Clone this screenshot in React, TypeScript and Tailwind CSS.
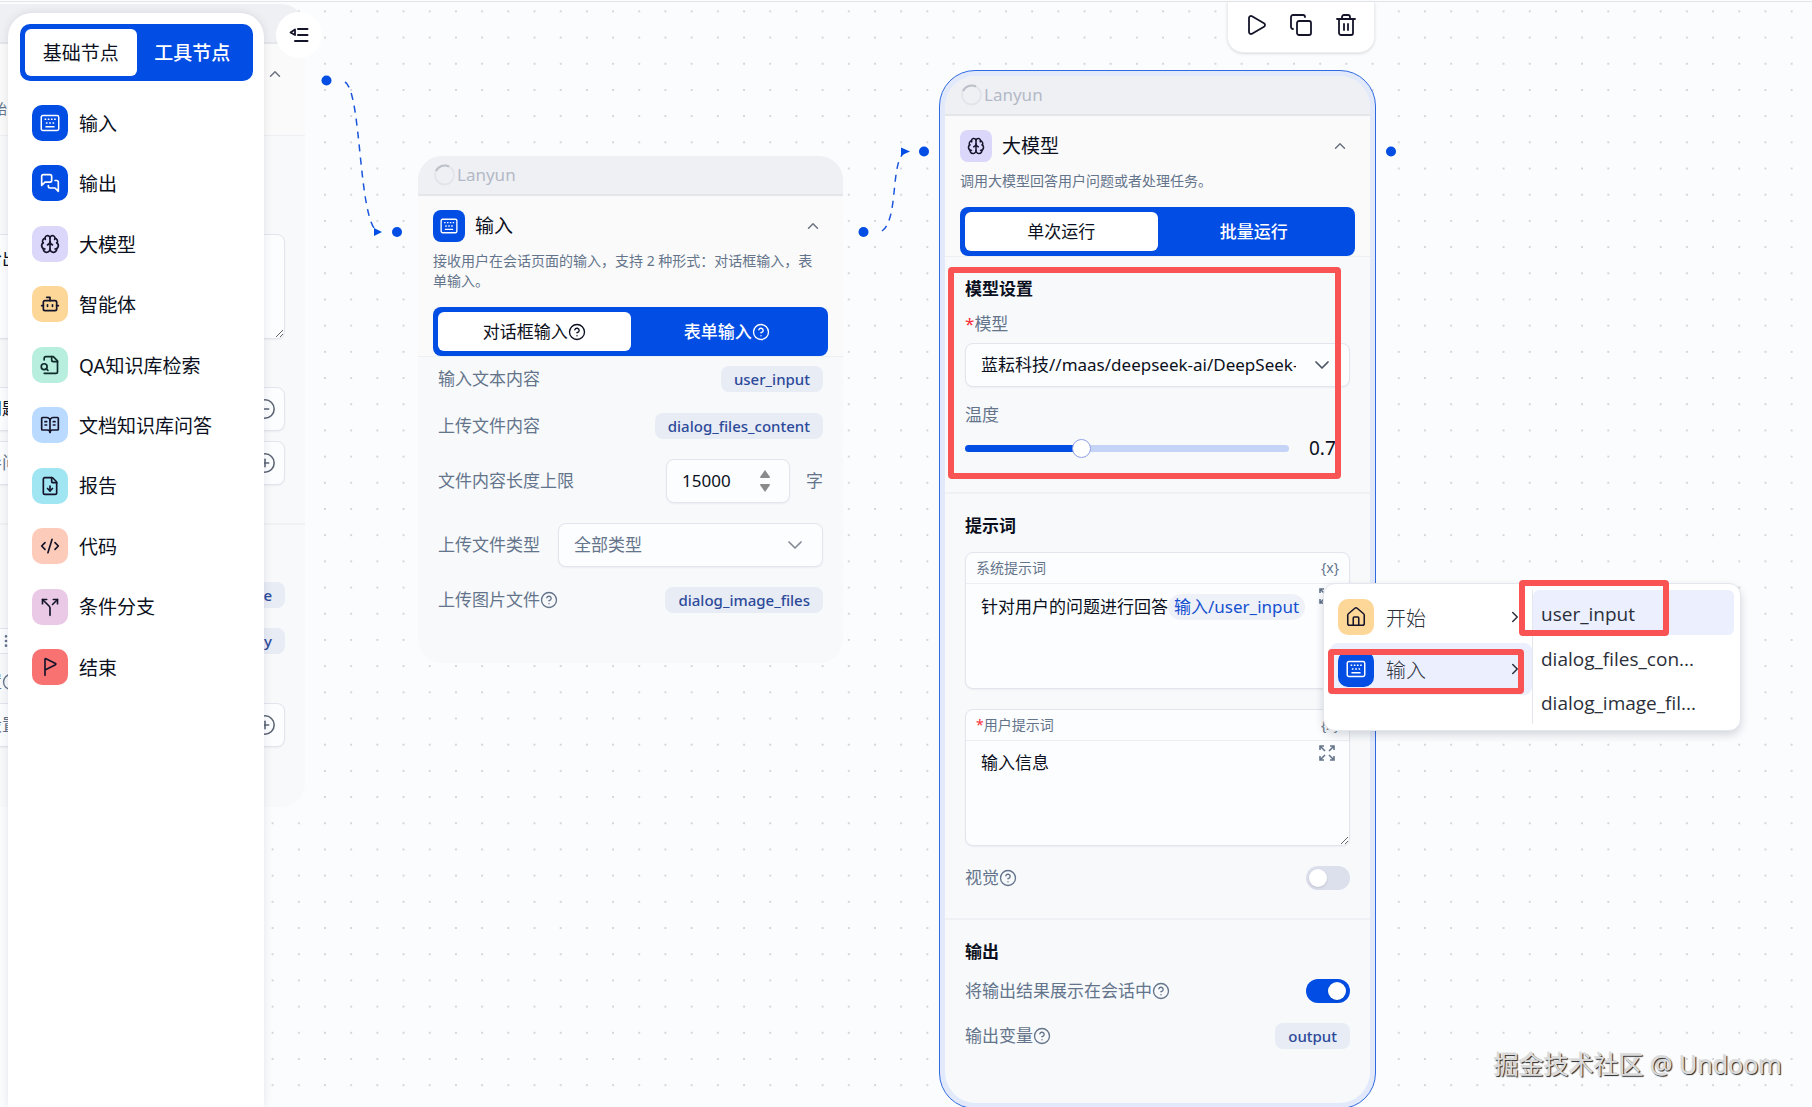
import React, { useState } from "react";
import {
  BookOpenText,
  Bot,
  Brain,
  ChevronDown,
  ChevronRight,
  ChevronUp,
  CircleMinus,
  CirclePlus,
  CircleQuestionMark,
  CodeXml,
  Copy,
  FileDown,
  FlagTriangleRight,
  GripVertical,
  House,
  Play,
  Split,
  Trash2,
} from "lucide-react";

type IconProps = { className?: string };

function KeyboardIcon({ className }: IconProps) {
  return (
    <svg viewBox="0 0 24 24" className={className} fill="none" stroke="currentColor" strokeWidth="1.8" aria-hidden="true">
      <rect x="1.5" y="3" width="21" height="18" rx="2" />
      <path d="M5.5 7.5h2M9.3 7.5h2M13.1 7.5h2M16.9 7.5h2M7 12h2M11 12h2M15 12h2" />
      <path d="M6.5 16.5h11" />
    </svg>
  );
}

function ChatsIcon({ className }: IconProps) {
  return (
    <svg
      viewBox="0 0 24 24"
      className={className}
      fill="none"
      stroke="currentColor"
      strokeWidth="2"
      strokeLinecap="round"
      strokeLinejoin="round"
      aria-hidden="true"
    >
      <path d="M14 9a2 2 0 0 1-2 2H6l-4 4V4c0-1.1.9-2 2-2h8a2 2 0 0 1 2 2z" />
      <path d="M18 9h2a2 2 0 0 1 2 2v11l-4-4h-6a2 2 0 0 1-2-2v-1" />
    </svg>
  );
}

function FileLookupIcon({ className }: IconProps) {
  return (
    <svg
      viewBox="0 0 24 24"
      className={className}
      fill="none"
      stroke="currentColor"
      strokeWidth="2"
      strokeLinecap="round"
      strokeLinejoin="round"
      aria-hidden="true"
    >
      <path d="M14 2v4a2 2 0 0 0 2 2h5" />
      <path d="M5 22h14a2 2 0 0 0 2-2V7l-5-5H7a2 2 0 0 0-2 2v2" />
      <circle cx="5" cy="14" r="3.500" />
      <path d="m9.500 18.500-2-2" />
    </svg>
  );
}

function CollapseIcon({ className }: IconProps) {
  return (
    <svg viewBox="0 0 20 16" className={className} fill="none" stroke="currentColor" strokeWidth="2" strokeLinecap="round" strokeLinejoin="round" aria-hidden="true">
      <path d="M9 2h9.500M9 8h9.500M6 14h12.500" />
      <path d="M6 2.500 1.500 5.500 6 8z" fill="none" strokeWidth="1.800" />
    </svg>
  );
}

function ExpandIcon({ className }: IconProps) {
  return (
    <svg viewBox="0 0 16 16" className={className} fill="none" stroke="currentColor" strokeWidth="1.600" aria-hidden="true">
      <path d="M1 5V1h4M1 1l5 5M11 1h4v4M15 1l-5 5M1 11v4h4M1 15l5-5M15 11v4h-4M15 15l-5-5" />
    </svg>
  );
}

function Spinner() {
  return (
    <svg viewBox="0 0 22 22" className="mr-px size-[22px]" fill="none" strokeWidth="2" aria-hidden="true">
      <circle cx="10.500" cy="11" r="9.500" stroke="#e3e5ea" />
      <path d="M2 7a9.500 9.500 0 0 1 13-4.500" stroke="#bcc0c9" />
    </svg>
  );
}

const paletteItems = [
  { label: "输入", icon: KeyboardIcon, tone: "bg-[#024de3] text-white" },
  { label: "输出", icon: ChatsIcon, tone: "bg-[#024de3] text-white" },
  { label: "大模型", icon: Brain, tone: "bg-[#dad7fb] text-[#14142b]" },
  { label: "智能体", icon: Bot, tone: "bg-[#fdd798] text-[#14142b]" },
  { label: "QA知识库检索", icon: FileLookupIcon, tone: "bg-[#b8eedd] text-[#0f2a2b]" },
  { label: "文档知识库问答", icon: BookOpenText, tone: "bg-[#badaff] text-[#14142b]" },
  { label: "报告", icon: FileDown, tone: "bg-[#a0e5f2] text-[#14142b]" },
  { label: "代码", icon: CodeXml, tone: "bg-[#fdcbb9] text-[#14142b]" },
  { label: "条件分支", icon: Split, tone: "bg-[#eac9e6] text-[#14142b]" },
  { label: "结束", icon: FlagTriangleRight, tone: "bg-[#f87272] text-[#14142b]" },
];

function Palette() {
  return (
    <aside className="relative z-10 ml-2 mt-[13px] flex w-64 flex-col rounded-t-3xl bg-white pl-3 pr-[11px] pt-[11px] shadow-[0_0_10px_rgba(15,23,42,0.10)]">
      <div className="flex h-[57px] rounded-[10px] bg-[#024de3] p-[5px] text-[19px]" role="tablist">
        <button role="tab" aria-selected="true" className="flex-1 rounded-md bg-white pt-0.5 text-[#0b1020]">
          基础节点
        </button>
        <button role="tab" aria-selected="false" className="flex-1 pt-0.5 font-medium text-white">
          工具节点
        </button>
      </div>
      <ul className="mt-6 flex h-[580px] flex-col justify-between px-3">
        {paletteItems.map(({ label, icon: Icon, tone }) => (
          <li key={label}>
            <button className="flex h-9 w-full items-center gap-[11px] text-left text-[19px] text-[#0b1020]">
              <span className={`flex size-9 items-center justify-center rounded-[10px] ${tone}`}>
                <Icon className="size-5" />
              </span>
              <span className="pt-0.5">{label}</span>
            </button>
          </li>
        ))}
      </ul>
    </aside>
  );
}

function Help() {
  return <CircleQuestionMark className="size-[18px] shrink-0" strokeWidth={1.8} />;
}

function Tag({ children }: { children: React.ReactNode }) {
  return (
    <span className="flex h-[26px] items-center rounded-lg bg-[#e8ecf5] px-[13px] text-[15px] font-medium text-[#2c4a9a]">
      {children}
    </span>
  );
}

function Row({ label, help, className = "", children }: { label: string; help?: boolean; className?: string; children: React.ReactNode }) {
  return (
    <div className={`flex items-center justify-between ${className}`}>
      <span className="flex items-center text-[17px] leading-6 text-[#64748b]">
        {label}
        {help && <Help />}
      </span>
      {children}
    </div>
  );
}

function Tabs({ items, help }: { items: string[]; help?: boolean }) {
  return (
    <div className="mt-4 flex h-[49px] rounded-lg bg-[#024de3] p-[5px] text-[17px]" role="tablist">
      <button role="tab" aria-selected="true" className="flex flex-1 items-center justify-center rounded-md bg-white text-[#0b1020]">
        {items[0]}
        {help && <Help />}
      </button>
      <button role="tab" aria-selected="false" className="flex flex-1 items-center justify-center font-medium text-white">
        {items[1]}
        {help && <Help />}
      </button>
    </div>
  );
}

function NodeCard({
  title,
  icon,
  desc,
  children,
  className = "",
  tabs,
}: {
  title: string;
  icon: React.ReactNode;
  desc: string;
  children: React.ReactNode;
  className?: string;
  tabs?: React.ReactNode;
}) {
  return (
    <article className={`w-[425px] overflow-hidden bg-[#f7f9fb] ${className}`}>
      <div className="flex h-10 items-center border-b-2 border-[#e4e6ea] bg-[#eff0f4] pl-4 text-[17px] text-[#b3b9c6]">
        <Spinner />
        <span>Lanyun</span>
      </div>
      <div className="border-b border-[#edeff2] bg-[#fafafa] px-[15px] pt-3.5">
        <div className="flex h-8 items-center text-[19px] text-[#0b1020]">
          {icon}
          <h2 className="ml-2.5 flex-1">{title}</h2>
          <button aria-label="收起" className="mr-1.5 text-[#6b7280]">
            <ChevronUp className="size-[18px]" />
          </button>
        </div>
        <p className="mt-[9px] pr-2 text-sm leading-5 text-[#64748b]">{desc}</p>
        {tabs}
      </div>
      {children}
    </article>
  );
}

function NodeIcon({ tone, children }: { tone: string; children: React.ReactNode }) {
  return <span className={`flex size-8 items-center justify-center rounded-lg ${tone}`}>{children}</span>;
}

const fieldBox = "rounded-lg border border-[#e2e5ee] bg-[#fcfdff] shadow-[0_1px_2px_rgba(15,23,42,0.05)]";

function StartNode() {
  return (
    <NodeCard
      className="absolute left-[-120px] top-1 rounded-3xl"
      title="开始"
      desc="工作流运行的起始"
      icon={
        <NodeIcon tone="bg-[#fdd798] text-[#14142b]">
          <House className="size-[18px]" />
        </NodeIcon>
      }
      tabs={<div className="h-4" />}
    >
      <section className="border-b-2 border-[#eff1f4] px-5 pb-[38px] pt-[98px]">
        <textarea
          aria-label="开场白"
          defaultValue="请在此处给出说明"
          className={`block h-[105px] w-full resize px-4 py-3 text-[17px] leading-6 text-[#0b1020] ${fieldBox}`}
        />
        <div className={`mt-12 flex h-11 items-center justify-between pl-4 pr-2 text-[17px] text-[#0b1020] ${fieldBox}`}>
          请输入的问题
          <CircleMinus className="size-[22px] text-[#5b6475]" strokeWidth={1.7} />
        </div>
        <div className={`mt-2.5 flex h-11 items-center justify-between pl-4 pr-2 text-[17px] text-[#64748b] ${fieldBox}`}>
          请输入引导问
          <CirclePlus className="size-[22px] text-[#5b6475]" strokeWidth={1.7} />
        </div>
      </section>
      <section className="px-5 pb-[60px] pt-[57px]">
        <Row label="全局变量">
          <Tag>current_time</Tag>
        </Row>
        <div className="mt-5 flex items-center justify-between">
          <span className="flex h-[26px] w-40 items-center rounded border border-[#e2e5ee] bg-[#fcfdff] pl-[99px] text-[#64748b]">
            <GripVertical className="size-4" />
          </span>
          <Tag>chat_history</Tag>
        </div>
        <Row label="预置问题配置" help className="mt-4">
          <span />
        </Row>
        <div className={`mt-[9px] flex h-11 items-center justify-between pl-4 pr-2 text-[17px] text-[#64748b] ${fieldBox}`}>
          请输入预设置
          <CirclePlus className="size-[22px] text-[#5b6475]" strokeWidth={1.7} />
        </div>
      </section>
    </NodeCard>
  );
}

function InputNode() {
  return (
    <NodeCard
      className="absolute left-[418px] top-[156px] rounded-3xl"
      title="输入"
      desc="接收用户在会话页面的输入，支持 2 种形式：对话框输入，表单输入。"
      icon={
        <NodeIcon tone="bg-[#024de3] text-white">
          <KeyboardIcon className="size-[18px]" />
        </NodeIcon>
      }
      tabs={<Tabs items={["对话框输入", "表单输入"]} help />}
    >
      <section className="px-5 pb-[50px] pt-[9px]">
        <Row label="输入文本内容">
          <Tag>user_input</Tag>
        </Row>
        <Row label="上传文件内容" className="mt-[21px]">
          <Tag>dialog_files_content</Tag>
        </Row>
        <Row label="文件内容长度上限" className="mt-5">
          <div className="flex items-center gap-4 text-[17px] text-[#64748b]">
            <div className={`flex h-11 w-[124px] items-center pl-[15px] pr-[18px] ${fieldBox}`}>
              <input
                aria-label="文件内容长度上限"
                defaultValue="15000"
                className="w-full min-w-0 bg-transparent text-[17px] text-[#0b1020] outline-none"
              />
              <span className="flex flex-col gap-1.5 text-[#8a8a8a]">
                <button aria-label="增加">
                  <svg viewBox="0 0 12 8" className="h-2 w-3" fill="currentColor"><path d="M6 0 11 7q0 1-1 1H2Q1 8 1 7z" /></svg>
                </button>
                <button aria-label="减少">
                  <svg viewBox="0 0 12 8" className="h-2 w-3" fill="currentColor"><path d="M6 8 11 1q0-1-1-1H2Q1 0 1 1z" /></svg>
                </button>
              </span>
            </div>
            字
          </div>
        </Row>
        <Row label="上传文件类型" className="mt-5">
          <div className="relative w-[265px]">
            <select aria-label="上传文件类型" className={`h-11 w-full appearance-none px-[15px] text-[17px] text-[#64748b] ${fieldBox}`}>
              <option>全部类型</option>
            </select>
            <ChevronDown className="pointer-events-none absolute right-4 top-2.5 size-6 text-[#858b96]" strokeWidth={1.7} />
          </div>
        </Row>
        <Row label="上传图片文件" help className="mt-5">
          <Tag>dialog_image_files</Tag>
        </Row>
      </section>
    </NodeCard>
  );
}

function Switch({ label, defaultChecked }: { label: string; defaultChecked?: boolean }) {
  return (
    <input
      type="checkbox"
      role="switch"
      aria-label={label}
      defaultChecked={defaultChecked}
      className="flex h-6 w-11 appearance-none items-center rounded-full bg-[#dcdfec] px-[3px] before:size-[18px] before:rounded-full before:bg-white before:shadow-sm checked:justify-end checked:bg-[#024de3] checked:px-1"
    />
  );
}

function PromptHead({ label, required }: { label: string; required?: boolean }) {
  return (
    <div className="flex h-[31px] items-center justify-between border-b border-[#eceef4] px-2.5 text-sm text-[#64748b]">
      <span>
        {required && <span className="text-red-500">*</span>}
        {label}
      </span>
      <button aria-label="插入变量">{"{x}"}</button>
    </div>
  );
}

function ModelNode() {
  const [temperature, setTemperature] = useState(0.7);
  return (
    <div className="absolute left-[939px] top-[70px] rounded-[36px] border border-[#2f6ae0] bg-[#e1e9fb] p-[5px]">
      <NodeCard
        className="rounded-[31px]"
        title="大模型"
        desc="调用大模型回答用户问题或者处理任务。"
        icon={
          <NodeIcon tone="bg-[#dad7fb] text-[#14142b]">
            <Brain className="size-[18px]" />
          </NodeIcon>
        }
        tabs={<Tabs items={["单次运行", "批量运行"]} />}
      >
        <section className="border-b-2 border-[#eff1f4] px-5 pb-8 pt-5">
          <h3 className="text-[17px] font-bold leading-6 text-[#0b1020]">模型设置</h3>
          <label htmlFor="model" className="mt-[11px] block text-[17px] leading-6 text-[#64748b]">
            <span className="text-red-500">*</span>模型
          </label>
          <div className="relative mt-[7px]">
            <select id="model" className={`h-11 w-full appearance-none pl-[15px] pr-[53px] text-[17px] text-[#0b1020] ${fieldBox}`}>
              <option>蓝耘科技//maas/deepseek-ai/DeepSeek-R1</option>
            </select>
            <ChevronDown className="pointer-events-none absolute right-4 top-2.5 size-6 text-[#4b5563]" strokeWidth={1.7} />
          </div>
          <label htmlFor="temperature" className="mt-4 block text-[17px] leading-6 text-[#64748b]">
            温度
          </label>
          <div className="mt-[9px] flex h-6 items-center gap-5">
            <input
              id="temperature"
              type="range"
              min={0}
              max={2}
              step={0.1}
              value={temperature}
              onChange={(e) => setTemperature(Number(e.target.value))}
              className="h-[7px] w-[324px] appearance-none rounded-full bg-[linear-gradient(to_right,#024de3_36%,#c5d3f6_36%)] [&::-webkit-slider-thumb]:size-[19px] [&::-webkit-slider-thumb]:appearance-none [&::-webkit-slider-thumb]:rounded-full [&::-webkit-slider-thumb]:border [&::-webkit-slider-thumb]:border-[#8f9fe8] [&::-webkit-slider-thumb]:bg-white"
            />
            <output className="text-[19px] text-[#0b1020]">{temperature}</output>
          </div>
        </section>
        <section className="border-b-2 border-[#eff1f4] px-5 pb-7 pt-5">
          <h3 className="text-[17px] font-bold leading-6 text-[#0b1020]">提示词</h3>
          <div className={`mt-[14px] flex h-[137px] flex-col ${fieldBox}`}>
            <PromptHead label="系统提示词" />
            <div className="flex flex-1 items-start justify-between pl-[15px] pr-3.5 pt-1 text-[17px] text-[#0b1020]">
              <div role="textbox" aria-label="系统提示词" className="flex items-center whitespace-nowrap pt-1.5 leading-[26px]">
                针对用户的问题进行回答
                <span className="rounded-full bg-[#eef1f8] px-1.5 text-[#1550d0]">输入/user_input</span>
              </div>
              <button aria-label="放大" className="text-[#64748b]">
                <ExpandIcon className="size-4" />
              </button>
            </div>
          </div>
          <div className={`relative mt-5 h-[137px] ${fieldBox}`}>
            <PromptHead label="用户提示词" required />
            <textarea
              aria-label="用户提示词"
              defaultValue="输入信息"
              className="block h-[104px] w-full bg-transparent px-[15px] py-2.5 text-[17px] leading-6 text-[#0b1020] outline-none"
            />
            <button aria-label="放大" className="absolute right-3.5 top-[35px] text-[#64748b]">
              <ExpandIcon className="size-4" />
            </button>
          </div>
          <Row label="视觉" help className="mt-5">
            <Switch label="视觉" />
          </Row>
        </section>
        <section className="px-5 pb-[54px] pt-5">
          <h3 className="text-[17px] font-bold leading-6 text-[#0b1020]">输出</h3>
          <Row label="将输出结果展示在会话中" help className="mt-[15px]">
            <Switch label="将输出结果展示在会话中" defaultChecked />
          </Row>
          <Row label="输出变量" help className="mt-5">
            <Tag>output</Tag>
          </Row>
        </section>
      </NodeCard>
    </div>
  );
}

function CanvasLines() {
  return (
    <svg className="absolute inset-0 size-full" aria-hidden="true">
      <defs>
        <pattern id="dots" x="324" y="10.4" width="26.19" height="26.19" patternUnits="userSpaceOnUse">
          <circle cx="1" cy="1" r="0.8" fill="#a0a4ac" />
        </pattern>
      </defs>
      <rect width="100%" height="100%" fill="url(#dots)" />
      <g fill="none" stroke="#1a55dc" strokeWidth="1.5" strokeDasharray="7 6">
        <path d="M345 82C362 92 358 222 378 232" />
        <path d="M882 231C899 219 890 161 905 152" />
      </g>
      <g fill="#024de3">
        <path d="M374 228v8l8-4z" />
        <path d="M901 147.500v8l9-4z" />
        <circle cx="326.500" cy="80.500" r="5" />
        <circle cx="397" cy="232" r="5" />
        <circle cx="863.500" cy="232" r="5" />
        <circle cx="924" cy="151.500" r="5" />
        <circle cx="1391" cy="151.500" r="5" />
      </g>
    </svg>
  );
}

function VariableMenu() {
  return (
    <div
      role="menu"
      className="absolute left-[1323px] top-[583px] flex h-[148px] w-[418px] rounded-xl border border-[#e4e6ee] bg-white p-1.5 font-['Open_Sans','Noto_Sans_CJK_SC',sans-serif] text-[19px] text-[#2b2f3a] shadow-[0_4px_8px_rgba(15,23,42,0.16)]"
    >
      <div className="flex w-[202px] flex-col font-light">
        <button role="menuitem" className="flex h-[53px] items-center px-2">
          <span className="flex size-9 items-center justify-center rounded-[10px] bg-[#fdd798] text-[#14142b]">
            <House className="size-[22px]" strokeWidth={1.7} />
          </span>
          <span className="ml-3 flex-1 pt-1 text-left text-xl">开始</span>
          <ChevronRight className="size-[18px]" />
        </button>
        <button role="menuitem" className="flex h-[52px] items-center rounded-lg bg-[#ebeffe] px-2">
          <span className="flex size-9 items-center justify-center rounded-[10px] bg-[#024de3] text-white">
            <KeyboardIcon className="size-5" />
          </span>
          <span className="ml-3 flex-1 pt-1 text-left text-xl">输入</span>
          <ChevronRight className="size-[18px]" />
        </button>
      </div>
      <div className="flex flex-1 flex-col border-l border-[#e4e6ee]">
        <button role="menuitem" className="h-[45px] rounded-md bg-[#ebeffe] px-2 pt-1 text-left">user_input</button>
        <button role="menuitem" className="h-[45px] px-2 pt-1 text-left">dialog_files_con...</button>
        <button role="menuitem" className="h-[45px] px-2 pt-1 text-left">dialog_image_fil...</button>
      </div>
    </div>
  );
}

export default function App() {
  return (
    <main className="relative flex h-screen overflow-hidden bg-[#fbfcfe] font-['Noto_Sans','Noto_Sans_CJK_SC',sans-serif]">
      <CanvasLines />
      <div className="absolute inset-x-0 top-0 h-0.5 border-b border-[#e3e5e8]" />
      <StartNode />
      <InputNode />
      <ModelNode />
      <div className="absolute left-[1227px] top-0.5 flex h-[51px] w-[148px] items-center justify-center gap-[21px] rounded-b-2xl border border-t-0 border-[#eceef2] bg-white pb-1 text-[#14142b] shadow-sm">
        <button aria-label="运行"><Play className="size-6" strokeWidth={1.8} /></button>
        <button aria-label="复制"><Copy className="size-6" strokeWidth={1.8} /></button>
        <button aria-label="删除"><Trash2 className="size-6" strokeWidth={1.8} /></button>
      </div>
      <Palette />
      <button
        aria-label="收起面板"
        className="relative z-10 ml-3 mt-3 flex size-[46px] items-center justify-center rounded-full bg-white text-[#14142b]"
      >
        <CollapseIcon className="h-4 w-5" />
      </button>
      <VariableMenu />
      <div className="pointer-events-none absolute left-[948px] top-[267px] h-[212px] w-[393px] rounded-[4px] border-6 border-[#f95353]" />
      <div className="pointer-events-none absolute left-[1328px] top-[649px] h-[45px] w-[196px] rounded-[4px] border-6 border-[#f95353]" />
      <div className="pointer-events-none absolute left-[1519px] top-[580px] h-[56px] w-[150px] rounded-[4px] border-6 border-[#f95353]" />
      <p className="absolute bottom-6 right-[30px] text-[25px] text-[#dcdcdc] [text-shadow:1px_1px_1px_#222,-1px_-1px_0_#ddd]">
        掘金技术社区 @ Undoom
      </p>
    </main>
  );
}
